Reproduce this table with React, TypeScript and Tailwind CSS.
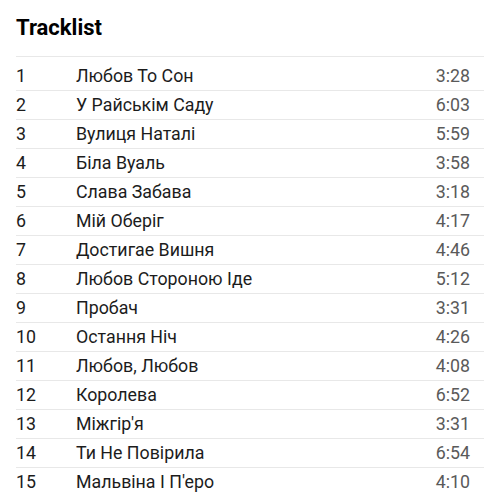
const tracks: [string, string][] = [
  ["Любов То Сон", "3:28"],
  ["У Райськім Саду", "6:03"],
  ["Вулиця Наталі", "5:59"],
  ["Біла Вуаль", "3:58"],
  ["Слава Забава", "3:18"],
  ["Мій Оберіг", "4:17"],
  ["Достигае Вишня", "4:46"],
  ["Любов Стороною Іде", "5:12"],
  ["Пробач", "3:31"],
  ["Остання Ніч", "4:26"],
  ["Любов, Любов", "4:08"],
  ["Королева", "6:52"],
  ["Міжгір'я", "3:31"],
  ["Ти Не Повірила", "6:54"],
  ["Мальвіна І П'еро", "4:10"],
];

export default function App() {
  return (
    <div className="w-[500px] h-[500px] overflow-hidden bg-white px-4 font-['Roboto',sans-serif] text-[#1c1c1c]">
      <h2 className="pt-[12px] h-[56px] text-[22px] font-bold leading-[32px] text-black">Tracklist</h2>
      <ul className="border-t border-[#e8e8e8] pt-[5px]">
        {tracks.map(([title, time], i) => (
          <li
            key={i}
            className="flex h-[29px] items-center border-b border-[#e8e8e8] pr-[14px] text-[17.8px] last:border-b-0"
          >
            <span className="w-[60px]">{i + 1}</span>
            <span className="flex-1">{title}</span>
            <span className="text-[#5a5a5a]">{time}</span>
          </li>
        ))}
      </ul>
    </div>
  );
}
